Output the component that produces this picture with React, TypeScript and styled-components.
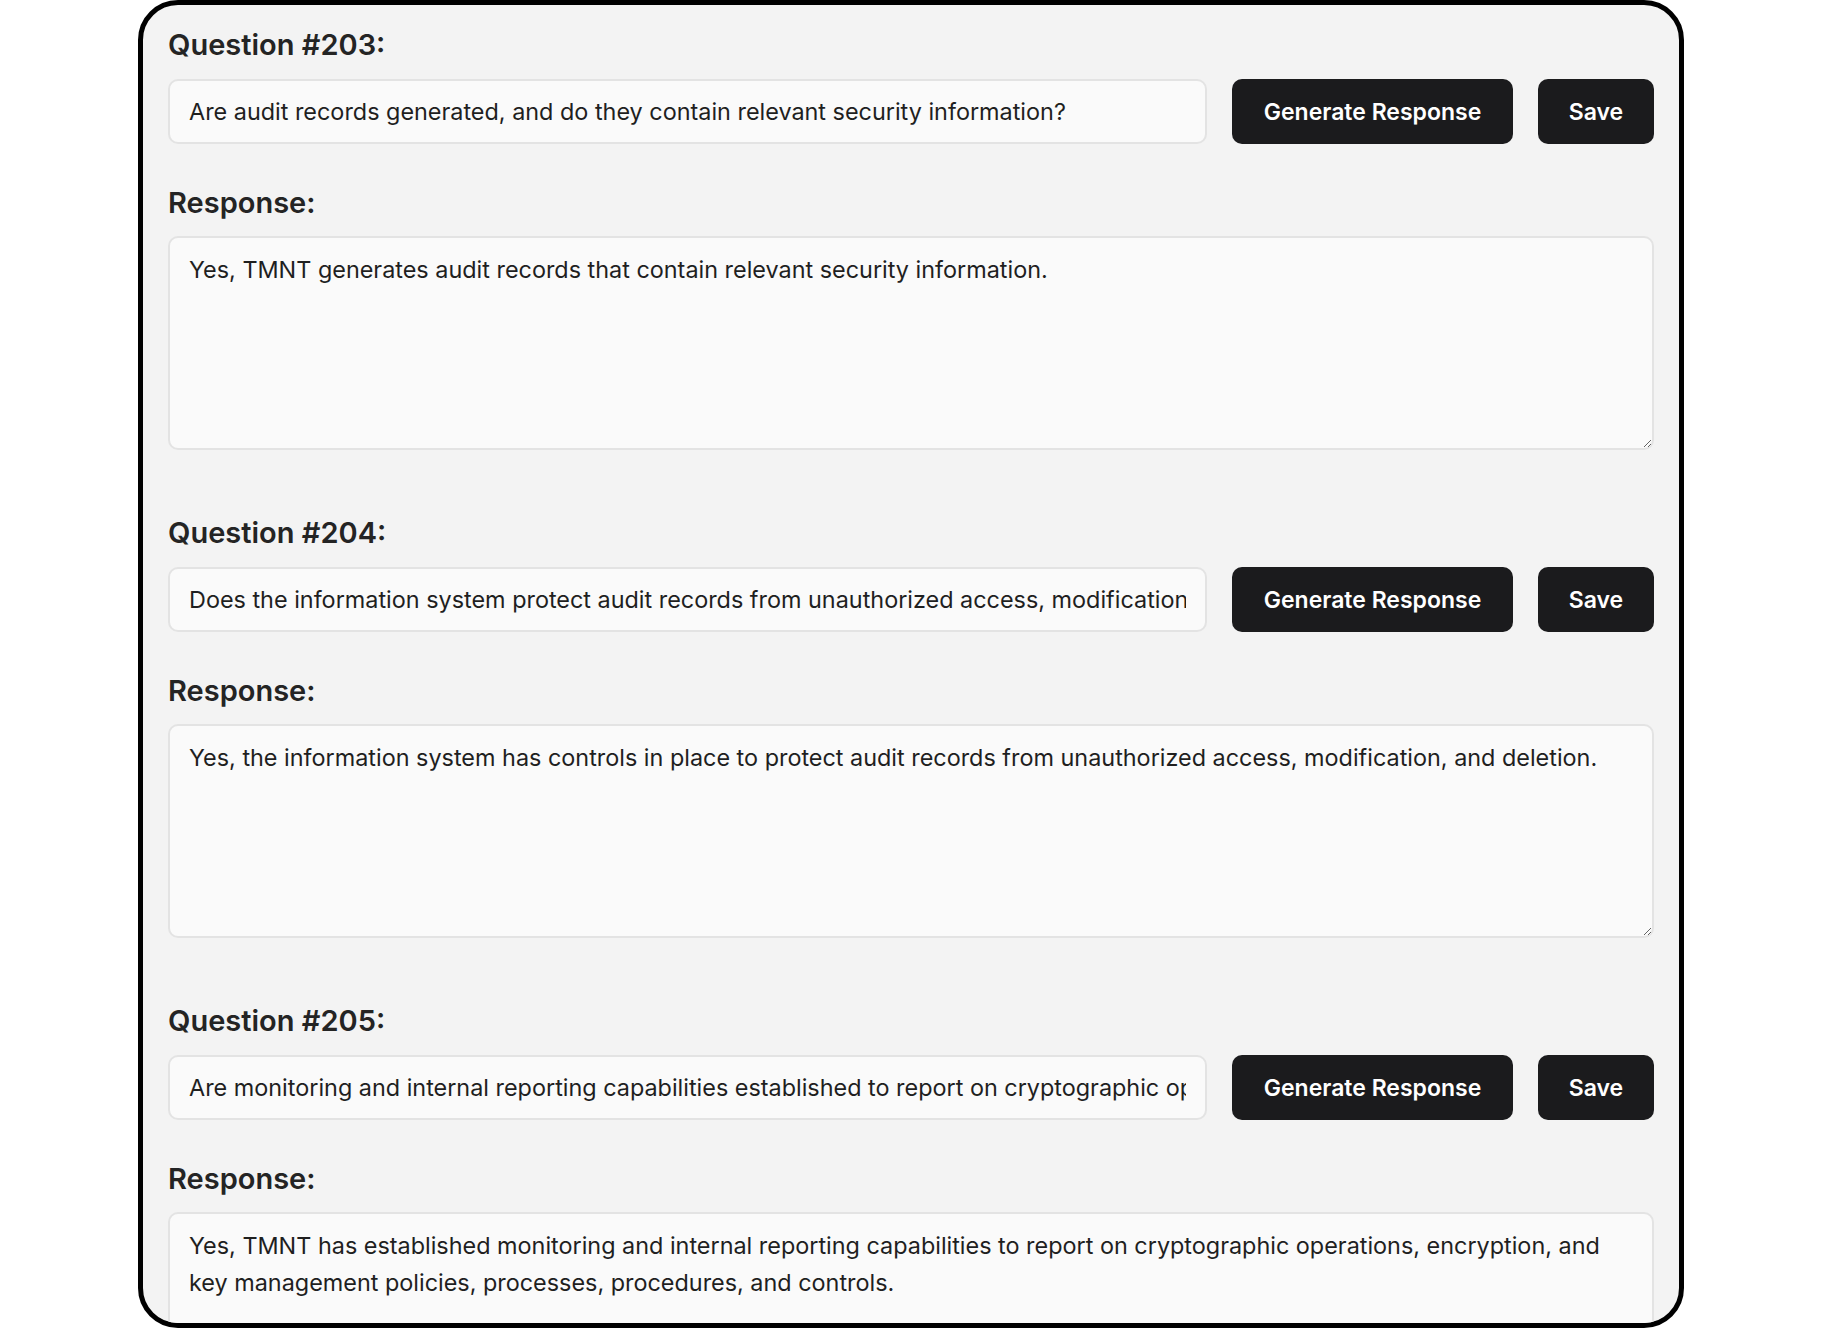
import React from "react";
import styled, { createGlobalStyle } from "styled-components";

const Global = createGlobalStyle`
  html, body { margin: 0; padding: 0; background: #ffffff; }
  body { font-family: Inter, "Noto Sans", sans-serif; }
  * { box-sizing: border-box; }
`;

const Page = styled.div`
  width: 1822px;
  height: 1328px;
  overflow: hidden;
  background: #ffffff;
`;

const Frame = styled.main`
  margin-left: 138px;
  width: 1546px;
  height: 1328px;
  border: 5px solid #000000;
  border-radius: 40px;
  background: #f3f3f3;
  overflow: hidden;
  padding: 23px 25px 0 25px;
  display: flex;
  flex-direction: column;
`;

const Section = styled.section`
  display: flex;
  flex-direction: column;
  margin-bottom: 66px;
`;

const Label = styled.h2<{ $gap: number }>`
  margin: 0 0 ${(p) => p.$gap}px 0;
  font-family: Inter, "Noto Sans", sans-serif;
  font-size: 29px;
  line-height: 34px;
  font-weight: 600;
  color: #242424;
`;

const QuestionRow = styled.div`
  display: flex;
  align-items: stretch;
  gap: 25px;
  height: 65px;
  margin-bottom: 42px;
`;

const QuestionInput = styled.input`
  flex: 1;
  min-width: 0;
  height: 65px;
  border: 2px solid #e3e3e3;
  border-radius: 10px;
  background: #fafafa;
  padding: 0 19px;
  font-family: Inter, "Noto Sans", sans-serif;
  font-size: 23.4px;
  color: #1f1f1f;
  outline: none;
`;

const Button = styled.button<{ $w: number }>`
  width: ${(p) => p.$w}px;
  height: 65px;
  border: none;
  border-radius: 10px;
  background: #1b1b1d;
  color: #ffffff;
  font-family: Inter, "Noto Sans", sans-serif;
  font-size: 23px;
  font-weight: 600;
  cursor: pointer;
  flex-shrink: 0;
`;

const ResponseArea = styled.textarea`
  width: 100%;
  height: 214px;
  border: 2px solid #e3e3e3;
  border-radius: 10px;
  background: #fafafa;
  padding: 13px 19px;
  font-family: Inter, "Noto Sans", sans-serif;
  font-size: 23.4px;
  line-height: 37px;
  color: #1f1f1f;
  resize: vertical;
  outline: none;
  display: block;
`;

const items = [
  {
    n: 203,
    q: "Are audit records generated, and do they contain relevant security information?",
    r: "Yes, TMNT generates audit records that contain relevant security information.",
  },
  {
    n: 204,
    q: "Does the information system protect audit records from unauthorized access, modification, and deletion?",
    r: "Yes, the information system has controls in place to protect audit records from unauthorized access, modification, and deletion.",
  },
  {
    n: 205,
    q: "Are monitoring and internal reporting capabilities established to report on cryptographic operations, encryption, and key management policies, processes, procedures, and controls?",
    r: "Yes, TMNT has established monitoring and internal reporting capabilities to report on cryptographic operations, encryption, and key management policies, processes, procedures, and controls.",
  },
];

export default function App() {
  return (
    <Page>
      <Global />
      <Frame>
        {items.map((it) => (
          <Section key={it.n}>
            <Label $gap={17}>Question #{it.n}:</Label>
            <QuestionRow>
              <QuestionInput readOnly value={it.q} />
              <Button $w={281}>Generate Response</Button>
              <Button $w={116}>Save</Button>
            </QuestionRow>
            <Label $gap={16}>Response:</Label>
            <ResponseArea readOnly value={it.r} />
          </Section>
        ))}
      </Frame>
    </Page>
  );
}
